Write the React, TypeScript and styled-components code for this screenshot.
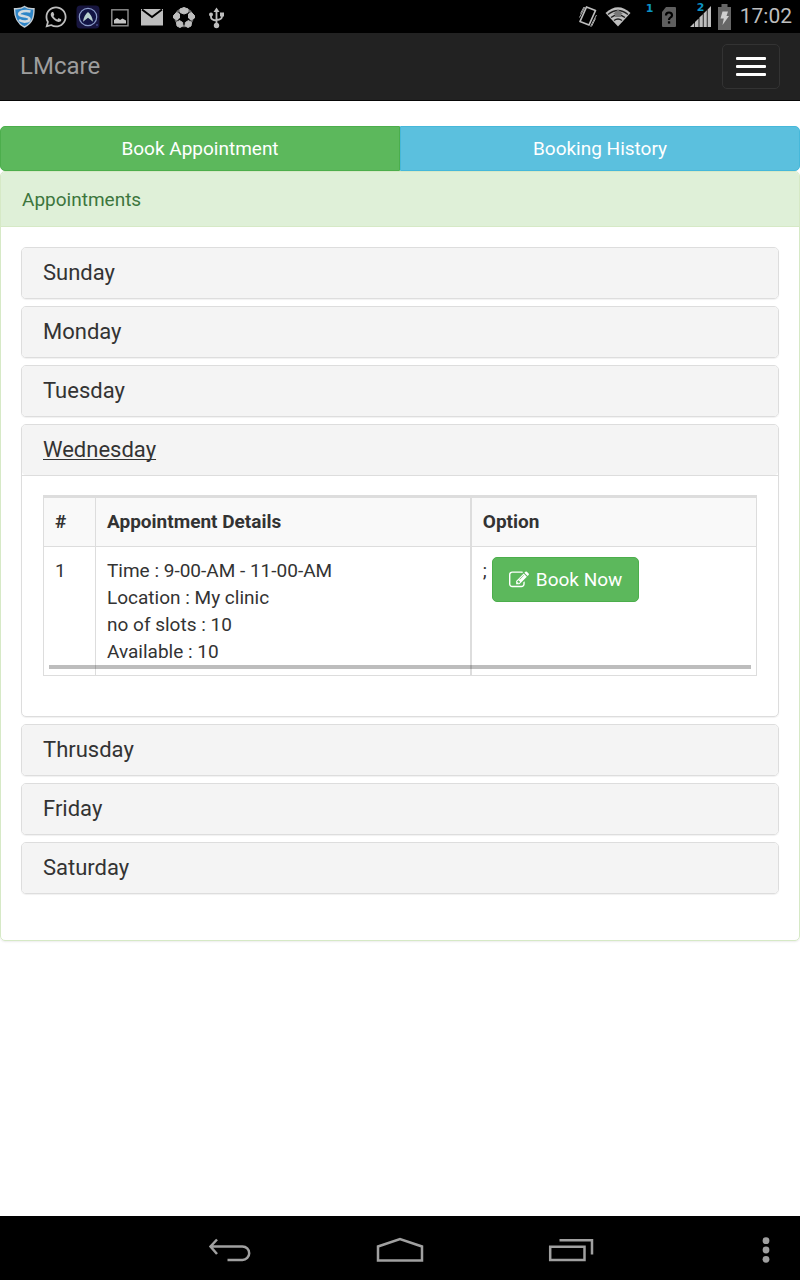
import React, { useState } from "react";
import styled, { createGlobalStyle, css } from "styled-components";
import { FaWhatsapp } from "react-icons/fa";

const GlobalStyle = createGlobalStyle`
  *, *::before, *::after { box-sizing: border-box; }
  body {
    margin: 0;
    background: #fff;
    color: #333;
    font-family: Roboto, "Liberation Sans", sans-serif;
    font-size: 19px;
    line-height: 27px;
  }
  button { font: inherit; cursor: pointer; }
`;

const Screen = styled.div`
  display: flex;
  flex-direction: column;
  min-height: 100vh;
`;

/* ---------- system status bar ---------- */

const StatusBar = styled.div`
  display: flex;
  align-items: center;
  justify-content: space-between;
  height: 33px;
  padding: 0 8px 0 12px;
  background: #000;
  color: #bebebe;
`;

const StatusGroup = styled.div<{ $gap: number }>`
  display: flex;
  align-items: center;
  gap: ${(p) => p.$gap}px;

  svg { display: block; }
`;

const SimSlot = styled.div<{ $space: number }>`
  position: relative;
  display: flex;
  padding-left: ${(p) => p.$space}px;
`;

const SimNumber = styled.span<{ $left: number }>`
  position: absolute;
  top: -4px;
  left: ${(p) => p.$left}px;
  color: #0b93c4;
  font: bold 11px/12px "DejaVu Sans", sans-serif;
`;

const Clock = styled.span`
  padding-left: 2px;
  font-size: 21px;
  line-height: 33px;
`;

/* ---------- page header ---------- */

const Navbar = styled.header`
  display: flex;
  align-items: center;
  justify-content: space-between;
  height: 68px;
  padding: 0 20px;
  background: #222;
  border-bottom: 1px solid #080808;
`;

const Brand = styled.a`
  color: #9d9d9d;
  font-size: 24px;
  text-decoration: none;
`;

const MenuToggle = styled.button`
  display: flex;
  flex-direction: column;
  align-items: center;
  justify-content: center;
  gap: 5px;
  width: 58px;
  height: 45px;
  padding: 0;
  background: transparent;
  border: 1px solid #333;
  border-radius: 5px;
`;

const MenuBar = styled.span`
  width: 30px;
  height: 3px;
  border-radius: 1px;
  background: #fff;
`;

/* ---------- content ---------- */

const Content = styled.main`
  flex: 1;
  padding-top: 25px;
`;

const buttonTones = {
  green: css`
    background: #5cb85c;
    border-color: #4cae4c;
  `,
  blue: css`
    background: #5bc0de;
    border-color: #46b8da;
  `,
};

const Button = styled.button<{ $tone: "green" | "blue" }>`
  display: inline-flex;
  align-items: center;
  justify-content: center;
  gap: 7px;
  height: 45px;
  padding: 0 16px;
  color: #fff;
  border: 1px solid;
  border-radius: 5px;
  ${(p) => buttonTones[p.$tone]}
`;

const ButtonGroup = styled.div`
  display: flex;

  ${Button} { flex: 1; }
  ${Button}:first-child { border-radius: 5px 0 0 5px; }
  ${Button}:last-child { border-radius: 0 5px 5px 0; }
`;

const Panel = styled.section`
  border: 1px solid #d6e9c6;
  border-radius: 5px;
  box-shadow: 0 1px 2px rgba(0, 0, 0, 0.08);
`;

const PanelHeading = styled.div`
  height: 55px;
  padding: 14px 21px 13px;
  color: #3c763d;
  background: #dff0d8;
  border-bottom: 1px solid #d6e9c6;
  border-radius: 4px 4px 0 0;
`;

const DayList = styled.div`
  display: flex;
  flex-direction: column;
  gap: 7px;
  padding: 20px 20px 46px;
`;

const DayPanel = styled.div`
  border: 1px solid #ddd;
  border-radius: 5px;
  box-shadow: 0 1px 1px rgba(0, 0, 0, 0.06);
`;

const DayTitle = styled.h4`
  margin: 0;
  height: 50px;
  padding: 11px 21px;
  background: #f4f4f4;
  border-radius: 4px;
  font-weight: 400;
`;

const DayToggle = styled.button<{ $open: boolean }>`
  display: block;
  padding: 0;
  color: #333;
  background: none;
  border: 0;
  font-size: 22px;
  line-height: 28px;
  text-decoration: ${(p) => (p.$open ? "underline" : "none")};
  text-decoration-thickness: 1px;
  text-underline-offset: 2px;
  text-decoration-skip-ink: none;
`;

const DayBody = styled.div`
  padding: 19px 21px 40px;
  border-top: 1px solid #ddd;
`;

const TableScroller = styled.div`
  position: relative;
`;

const ScrollThumb = styled.div`
  position: absolute;
  left: 6px;
  right: 6px;
  bottom: 7px;
  height: 4px;
  background: rgba(0, 0, 0, 0.26);
`;

const Table = styled.table`
  width: 100%;
  table-layout: fixed;
  border-spacing: 0;
  border-top: 3px solid #ddd;
  border-left: 1px solid #ddd;
`;

const cell = css`
  padding: 10px 11px;
  text-align: left;
  vertical-align: top;
  border-right: 1px solid #ddd;
  border-bottom: 1px solid #ddd;

  &:nth-child(2) { border-right-width: 2px; }
`;

const HeadCell = styled.th<{ $width?: string }>`
  ${cell}
  width: ${(p) => p.$width ?? "auto"};
  height: 49px;
  background: #f9f9f9;
  font-weight: 700;
`;

const Cell = styled.td`
  ${cell}
`;

const BookingOption = styled.div`
  display: flex;
  align-items: flex-start;
  gap: 5px;
`;

/* ---------- system navigation bar ---------- */

const SystemNav = styled.nav`
  display: grid;
  grid-template-columns: 1fr auto 1fr;
  height: 64px;
  background: #000;
`;

const NavKeys = styled.div`
  display: flex;
  grid-column: 2;
`;

const NavKey = styled.button<{ $width: number }>`
  display: flex;
  align-items: center;
  justify-content: center;
  width: ${(p) => p.$width}px;
  padding: 3px 0 0;
  background: none;
  border: 0;
  justify-self: end;
`;

/* ---------- icons ---------- */

const ShieldIcon = () => (
  <svg width="24" height="24" viewBox="0 0 24 24">
    <path d="M12.500 1.500C10 3.500 6 4 2.500 3.700 2.500 12 4.500 18 12.500 22 20.500 18 22 12 22 3.700 18.500 4 15 3.500 12.500 1.500Z" fill="#2f86c8" stroke="#c4cdd4" strokeWidth="1.400" />
    <path d="M18.500 6.500C14 5.500 7.500 6 7.200 9 7 12 17.500 10.500 17.500 14 17.500 17 11 17.500 7 15" fill="none" stroke="#d3dbe1" strokeWidth="2.600" />
  </svg>
);

const CompassIcon = () => (
  <svg width="24" height="24" viewBox="0 0 24 24">
    <rect x="0.500" y="0.500" width="23" height="23" rx="4" fill="#17153f" />
    <circle cx="12" cy="12" r="8.700" fill="#121445" stroke="#8b9cc9" strokeWidth="1.200" />
    <path d="M12 7C9.500 9 7.500 12.500 7 16.800L12 12.800 17 16.800C16.500 12.500 14.500 9 12 7Z" fill="#b9d0cf" />
    <path d="M20 20h2" stroke="#5562a8" />
  </svg>
);

const PictureIcon = () => (
  <svg width="24" height="24" viewBox="0 0 24 24">
    <rect x="3.800" y="4.800" width="16.200" height="16" fill="none" stroke="#8f8f8f" strokeWidth="1.400" />
    <path d="M6 18.500V15l3-2 3 2 2.500-1.500L18 15.500v3Z" fill="#c4c4c4" />
  </svg>
);

const MailIcon = () => (
  <svg width="24" height="24" viewBox="0 0 24 24">
    <rect x="1" y="4" width="22" height="16.500" fill="#bebebe" />
    <path d="M2 4.500 12 12 22 4.500" fill="none" stroke="#000" strokeWidth="2" />
  </svg>
);

const BallIcon = () => (
  <svg width="24" height="24" viewBox="0 0 24 24">
    <circle cx="12" cy="12.500" r="8.500" fill="none" stroke="#6c6c6c" strokeWidth="2.500" />
    <g fill="#bebebe" stroke="#bebebe" strokeWidth="1" strokeLinejoin="round">
      <path d="M8 4 12 2.500 16 4V7.500L12 9 8 7.500Z" />
      <path d="M1.500 10.500 4.500 7.500 7.500 9V13L5 15 1.500 13Z" />
      <path d="M22.500 10.500 19.500 7.500 16.500 9V13L19 15 22.500 13Z" />
      <path d="M4.500 17.500 7.500 15.500 10.700 17.500V21L8 22.500 5 21Z" />
      <path d="M19.500 17.500 16.500 15.500 13.300 17.500V21L16 22.500 19 21Z" />
    </g>
  </svg>
);

const UsbIcon = () => (
  <svg width="24" height="24" viewBox="0 0 24 24" fill="none" stroke="#bebebe" strokeWidth="1.800">
    <path d="M12.500 5v16M7 10v2q0 3 5.500 3.500M18 9v2.500q0 3-5.500 3.500" />
    <path d="M9.500 7 12.500 2.500 15.500 7Z" fill="#bebebe" stroke="none" />
    <circle cx="12.500" cy="20.500" r="2.700" fill="#bebebe" stroke="none" />
    <circle cx="7" cy="9.500" r="2" fill="#bebebe" stroke="none" />
    <rect x="16" y="7.500" width="4" height="4" fill="#bebebe" stroke="none" />
  </svg>
);

const VibrateIcon = () => (
  <svg width="20" height="24" viewBox="0 0 20 24" fill="none" stroke="#bebebe">
    <path d="M8.500 2 17.500 5.500 11 20 2 16.500Z" strokeWidth="1.700" strokeLinejoin="round" />
    <path d="M2.500 8.500 6 2M1.500 12.500 7 2M13.500 21.500 17.500 13.500M12.500 21.500 18.500 10" strokeWidth="0.900" />
  </svg>
);

const WifiIcon = () => (
  <svg width="26" height="24" viewBox="0 0 26 24">
    <path d="M0.500 8Q13-3.500 25.500 8L13 21.500Z" fill="#bebebe" />
    <path d="M3 9.500Q13 1.500 23 9.500M6 12.500Q13 7 20 12.500M9 15.500Q13 12.500 17 15.500" fill="none" stroke="#222" strokeWidth="1.300" />
    <path d="M10 12V9h-2L13 4.500 18 9h-2v3Z" fill="#777" />
  </svg>
);

const UnknownSimIcon = () => (
  <svg width="14" height="20" viewBox="0 0 14 20">
    <path d="M4 0H13a1 1 0 0 1 1 1V19a1 1 0 0 1-1 1H1a1 1 0 0 1-1-1V5Z" fill="#5f5f5f" />
    <path d="M4 8.500Q4 5.500 7 5.500T10 8.200Q10 9.700 8.300 10.600 7 11.400 7 13" fill="none" stroke="#000" strokeWidth="2.200" />
    <rect x="5.900" y="14.300" width="2.300" height="2.300" fill="#000" />
  </svg>
);

const SignalIcon = () => (
  <svg width="21" height="21" viewBox="0 0 21 21" fill="#bebebe">
    <path d="M0 21 4.300 16.700V21ZM5 21V16L8.600 12.400V21ZM9.400 21V11.600L12.800 8.200V21ZM13.600 21V7.400L16.800 4.200V21ZM17.600 21V3.400L21 0V21Z" />
  </svg>
);

const BatteryIcon = () => (
  <svg width="13" height="26" viewBox="0 0 13 26">
    <path d="M3.500 0h6v3H13V26H0V3h3.500Z" fill="#666" />
    <path d="M4.500 7.500H10L8.500 12H11L4.500 21 5.800 14.500H2.500Z" fill="#d0d0d0" />
  </svg>
);

const EditIcon = () => (
  <svg width="20" height="20" viewBox="0 0 1792 1792" fill="currentColor" aria-hidden="true">
    <path d="M888 1184l116-116-152-152-116 116v56h96v96h56zm440-720q-16-16-33 1l-350 350q-17 17-1 33t33-1l350-350q17-17 1-33zm80 594v190q0 119-84.500 203.500t-203.500 84.500h-832q-119 0-203.500-84.500t-84.500-203.500v-832q0-119 84.500-203.500t203.500-84.500h832q63 0 117 25 15 7 18 23 3 17-9 29l-49 49q-14 14-32 8-23-6-45-6h-832q-66 0-113 47t-47 113v832q0 66 47 113t113 47h832q66 0 113-47t47-113v-126q0-13 9-22l64-64q15-15 35-7t20 29zm-96-738l288 288-672 672h-288v-288zm444 132l-92 92-288-288 92-92q28-28 68-28t68 28l152 152q28 28 28 68t-28 68z" />
  </svg>
);

const BackIcon = () => (
  <svg width="44" height="24" viewBox="0 0 44 24" fill="none" stroke="#a0a0a0" strokeWidth="2.500">
    <path d="M3 8.500H35.500a6.700 6.700 0 0 1 0 13.400H20.500M10 1.500 3.500 8.500 10 16" />
  </svg>
);

const HomeIcon = () => (
  <svg width="48" height="26" viewBox="0 0 48 26" fill="none" stroke="#a0a0a0" strokeWidth="2.500">
    <path d="M2 23.500V9.500L24 2 46 9.500V23.500Z" />
  </svg>
);

const RecentsIcon = () => (
  <svg width="46" height="24" viewBox="0 0 46 24" fill="none" stroke="#a0a0a0" strokeWidth="2.500">
    <path d="M2.200 8.700H36.500V21.900H2.200ZM11.500 2.300H44V16.500" />
  </svg>
);

const MoreIcon = () => (
  <svg width="8" height="26" viewBox="0 0 8 26" fill="#a0a0a0">
    <circle cx="4" cy="3.700" r="3.400" />
    <circle cx="4" cy="13" r="3.400" />
    <circle cx="4" cy="22.300" r="3.400" />
  </svg>
);

/* ---------- data ---------- */

const days = ["Sunday", "Monday", "Tuesday", "Wednesday", "Thrusday", "Friday", "Saturday"];

const slots = [
  { id: 1, time: "9-00-AM - 11-00-AM", location: "My clinic", slots: 10, available: 10 },
];

const SlotTable = () => (
  <TableScroller>
    <Table>
      <thead>
        <tr>
          <HeadCell $width="52px">#</HeadCell>
          <HeadCell>Appointment Details</HeadCell>
          <HeadCell $width="40%">Option</HeadCell>
        </tr>
      </thead>
      <tbody>
        {slots.map((slot) => (
          <tr key={slot.id}>
            <Cell>{slot.id}</Cell>
            <Cell>
              <div>Time : {slot.time}</div>
              <div>Location : {slot.location}</div>
              <div>no of slots : {slot.slots}</div>
              <div>Available : {slot.available}</div>
            </Cell>
            <Cell>
              <BookingOption>
                <span>;</span>
                <Button type="button" $tone="green">
                  <EditIcon />
                  Book Now
                </Button>
              </BookingOption>
            </Cell>
          </tr>
        ))}
      </tbody>
    </Table>
    <ScrollThumb />
  </TableScroller>
);

export default function App() {
  const [openDay, setOpenDay] = useState("Wednesday");

  return (
    <Screen>
      <GlobalStyle />
      <StatusBar>
        <StatusGroup $gap={8}>
          <ShieldIcon />
          <FaWhatsapp size={24} />
          <CompassIcon />
          <PictureIcon />
          <MailIcon />
          <BallIcon />
          <UsbIcon />
        </StatusGroup>
        <StatusGroup $gap={7}>
          <VibrateIcon />
          <WifiIcon />
          <SimSlot $space={24}>
            <SimNumber $left={8}>1</SimNumber>
            <UnknownSimIcon />
          </SimSlot>
          <SimSlot $space={7}>
            <SimNumber $left={14}>2</SimNumber>
            <SignalIcon />
          </SimSlot>
          <BatteryIcon />
          <Clock>17:02</Clock>
        </StatusGroup>
      </StatusBar>

      <Navbar>
        <Brand href="#">LMcare</Brand>
        <MenuToggle type="button" aria-label="Toggle navigation">
          <MenuBar />
          <MenuBar />
          <MenuBar />
        </MenuToggle>
      </Navbar>

      <Content>
        <ButtonGroup>
          <Button type="button" $tone="green">Book Appointment</Button>
          <Button type="button" $tone="blue">Booking History</Button>
        </ButtonGroup>
        <Panel>
          <PanelHeading>Appointments</PanelHeading>
          <DayList>
            {days.map((day) => {
              const open = day === openDay;
              return (
                <DayPanel key={day}>
                  <DayTitle>
                    <DayToggle
                      type="button"
                      $open={open}
                      aria-expanded={open}
                      onClick={() => setOpenDay(open ? "" : day)}
                    >
                      {day}
                    </DayToggle>
                  </DayTitle>
                  {open && (
                    <DayBody>
                      <SlotTable />
                    </DayBody>
                  )}
                </DayPanel>
              );
            })}
          </DayList>
        </Panel>
      </Content>

      <SystemNav>
        <NavKeys>
          <NavKey type="button" aria-label="Back" $width={171}><BackIcon /></NavKey>
          <NavKey type="button" aria-label="Home" $width={171}><HomeIcon /></NavKey>
          <NavKey type="button" aria-label="Recent apps" $width={171}><RecentsIcon /></NavKey>
        </NavKeys>
        <NavKey type="button" aria-label="More" $width={68}><MoreIcon /></NavKey>
      </SystemNav>
    </Screen>
  );
}
